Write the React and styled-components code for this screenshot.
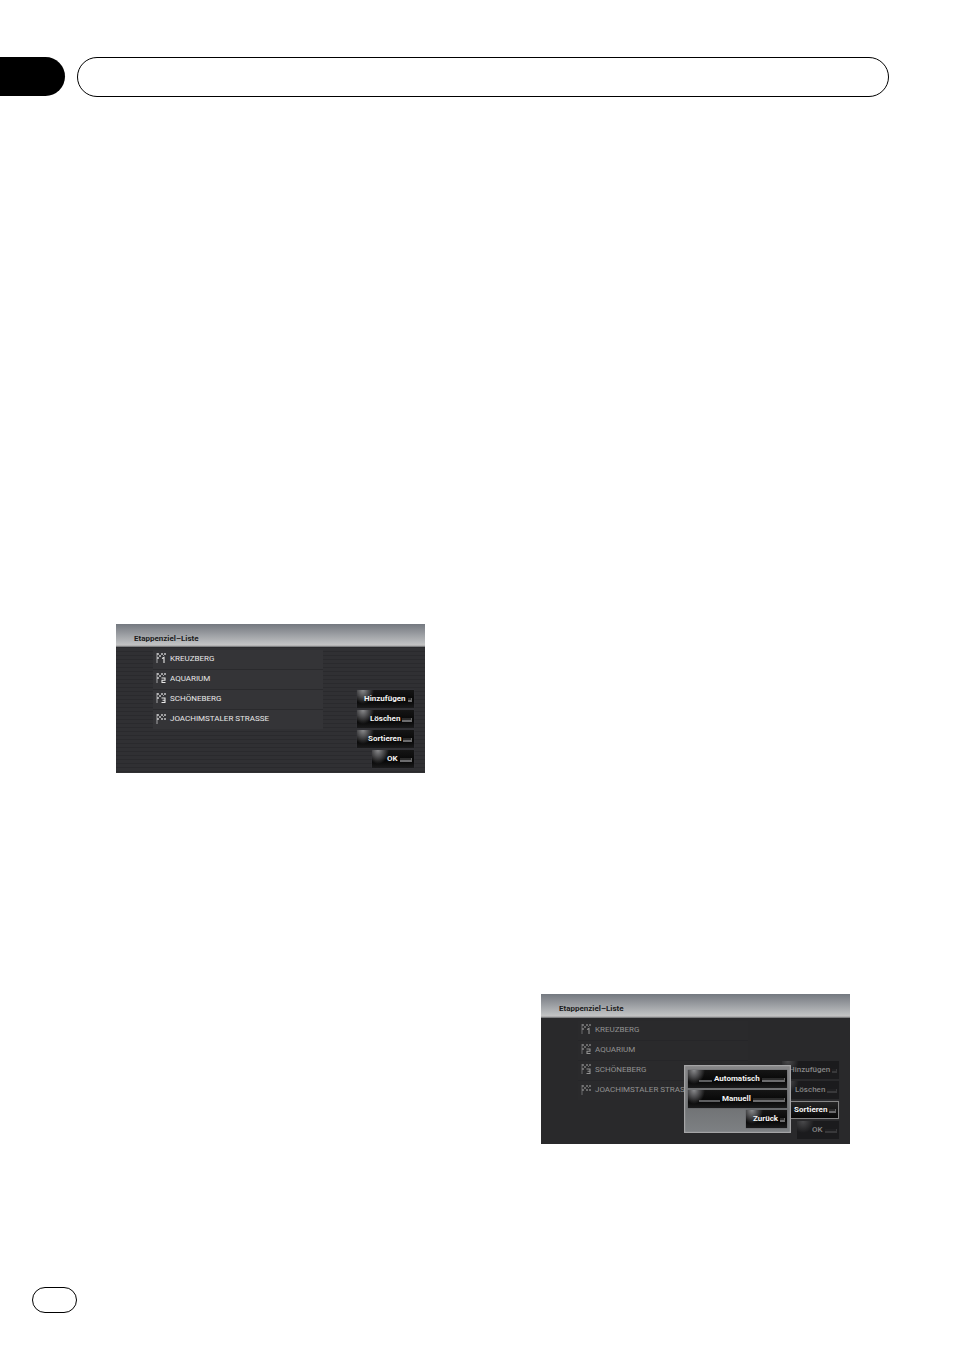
import React from "react";
import styled, { createGlobalStyle, css } from "styled-components";

const GlobalStyle = createGlobalStyle`
  *, *::before, *::after { box-sizing: border-box; }
  body { margin: 0; background: #fff; }
`;

const Page = styled.div`
  display: flex;
  flex-direction: column;
  min-height: 100vh;
  font-family: Roboto, "Liberation Sans", sans-serif;
`;

const Header = styled.header`
  display: flex;
  gap: 12px;
  padding: 57px 65px 0 0;
`;

const ChapterTab = styled.div`
  width: 65px;
  height: 39px;
  background: #000;
  border-radius: 0 20px 20px 0;
`;

const TitleFrame = styled.div`
  flex: 1;
  height: 40px;
  border: 1px solid #000;
  border-radius: 20px;
`;

const Columns = styled.main`
  flex: 1;
  display: grid;
  grid-template-columns: 1fr 1fr;
  gap: 116px;
  align-items: start;
  padding: 527px 104px 0 116px;
`;

const Column = styled.section`
  padding-top: ${(p) => (p.$lower ? "370px" : "0")};
`;

const Screen = styled.div`
  position: relative;
  display: flex;
  flex-direction: column;
  overflow: hidden;
  color: ${(p) => (p.$dimmed ? "#929292" : "#e8e8e8")};
  background: ${(p) =>
    p.$dimmed
      ? "#29292b"
      : "repeating-linear-gradient(#303033 0 3px, #2a2a2d 3px 4px)"};
`;

const ScreenTitle = styled.h2`
  margin: 0;
  height: ${(p) => (p.$dimmed ? "24px" : "23px")};
  padding: 6px 18px 0;
  font-size: 8px;
  line-height: 18px;
  font-weight: 700;
  color: #1c1c1c;
  background: linear-gradient(#747980, #92959a 35%, #b9bbbd 80%, #c4c4c4 92%, #66676a);
`;

const ScreenBody = styled.div`
  display: flex;
  justify-content: space-between;
  padding: 3px 11px 5px 37px;
`;

const StopList = styled.ol`
  list-style: none;
  margin: 0;
  padding: 0;
  width: 170px;
  height: 79px;
  background: ${(p) => (p.$dimmed ? "#2a2a2c" : "#343437")};
`;

const Stop = styled.li`
  display: flex;
  align-items: center;
  gap: 3px;
  height: 20px;
  padding: 0 0 2px 3px;
  font-size: 8px;
  line-height: 18px;
  white-space: nowrap;
  border-bottom: 1px solid ${(p) => (p.$dimmed ? "#262629" : "#2a2a2d")};
  &:last-child { border-bottom: 0; }
`;

const Actions = styled.div`
  display: flex;
  flex-direction: column;
  align-items: flex-end;
  gap: 2px;
  padding-top: 40px;
`;

const KeyButton = styled.button`
  display: flex;
  align-items: center;
  gap: 2px;
  width: ${(p) => p.$width || "57px"};
  height: 18px;
  padding: 0 2px 0 ${(p) => p.$indent || "7px"};
  border: 0;
  font-family: inherit;
  font-size: 8px;
  line-height: 18px;
  font-weight: 700;
  color: #f4f4f4;
  white-space: nowrap;
  background:
    radial-gradient(ellipse 11px 14px at 6px 0, #8a8b8d, #4c4c4e 50%, transparent),
    linear-gradient(#151515, #070707 60%, #1b1b1c);
  box-shadow: 0 0 1px #454547;

  &::after {
    content: "";
    flex: 1;
    height: 4px;
    margin-top: 1px;
    border-right: 1px solid #666;
    border-bottom: 2px solid #6c6c6e;
    background: #2b2b2b;
  }

  ${(p) => p.$lead && css`
    &::before {
      content: "";
      width: ${p.$lead};
      height: 2px;
      margin-top: 3px;
      background: #5d5e60;
    }
  `}

  ${(p) => p.$muted && css`
    color: #858585;
    font-weight: 500;
    background:
      radial-gradient(ellipse 11px 12px at 6px 0, #4b4b4d, transparent),
      #1b1b1d;
    box-shadow: none;
    &::after { border-color: #38383a; background: #202022; }
  `}

  ${(p) => p.$selected && css`
    border: 1px solid #858585;
    background: linear-gradient(#252525, #080808);
  `}
`;

const Popup = styled.div`
  position: absolute;
  right: 59px;
  bottom: 11px;
  display: flex;
  flex-direction: column;
  align-items: flex-end;
  gap: 2px;
  width: 107px;
  padding: 4px 3px;
  border: 1px solid #a4a4a6;
  background: linear-gradient(#858587, #727476 65%, #7d8083);
  box-shadow: inset 0 0 1px #ccc;
`;

const CHECKS = [[1, 0], [5, 0], [3, 2], [1, 4]];

const MARKS = {
  1: "M6 5.5 L8 4.5 V10",
  2: "M5.5 5 H9 V7.3 H6 V9.5 H9.5",
  3: "M5.5 5 H9 V9.5 H5.5 M6.5 7.3 H9",
};

function FlagIcon({ mark }) {
  return (
    <svg width="11" height="11" viewBox="0 0 11 11" aria-hidden="true">
      <path d="M1 0V10" stroke="currentColor" strokeWidth="0.8" opacity="0.8" />
      {CHECKS.map(([x, y]) => (
        <rect key={`${x}-${y}`} x={x} y={y} width="2" height="2" fill="currentColor" opacity="0.6" />
      ))}
      <path d="M7 2h1v1H7zM8 0h2v2H8z" fill="currentColor" opacity="0.6" />
      {mark ? (
        <path d={MARKS[mark]} fill="none" stroke="currentColor" strokeWidth="1.1" />
      ) : (
        <path d="M5 4h2v2H5zM8 4h2v2H8z" fill="currentColor" opacity="0.6" />
      )}
    </svg>
  );
}

const STOPS = [
  { name: "KREUZBERG", mark: 1 },
  { name: "AQUARIUM", mark: 2 },
  { name: "SCHÖNEBERG", mark: 3 },
  { name: "JOACHIMSTALER STRASSE" },
];

function StopsScreen({ sorting = false }) {
  return (
    <Screen $dimmed={sorting}>
      <ScreenTitle $dimmed={sorting}>Etappenziel–Liste</ScreenTitle>
      <ScreenBody>
        <StopList $dimmed={sorting}>
          {STOPS.map((stop) => (
            <Stop key={stop.name} $dimmed={sorting}>
              <FlagIcon mark={stop.mark} />
              {stop.name}
            </Stop>
          ))}
        </StopList>
        <Actions>
          <KeyButton type="button" $muted={sorting}>Hinzufügen</KeyButton>
          <KeyButton type="button" $muted={sorting} $indent="13px">Löschen</KeyButton>
          <KeyButton type="button" $selected={sorting} $indent="11px">Sortieren</KeyButton>
          <KeyButton type="button" $muted={sorting} $width="42px" $indent="15px">OK</KeyButton>
        </Actions>
      </ScreenBody>
      {sorting && (
        <Popup role="dialog" aria-label="Sortieren">
          <KeyButton type="button" $width="99px" $lead="13px" $indent="11px">Automatisch</KeyButton>
          <KeyButton type="button" $width="99px" $lead="21px" $indent="11px">Manuell</KeyButton>
          <KeyButton type="button" $width="41px">Zurück</KeyButton>
        </Popup>
      )}
    </Screen>
  );
}

const Footer = styled.footer`
  padding: 0 32px 38px;
`;

const PageNumberFrame = styled.div`
  width: 45px;
  height: 26px;
  border: 1px solid #000;
  border-radius: 13px;
`;

export default function App() {
  return (
    <Page>
      <GlobalStyle />
      <Header>
        <ChapterTab />
        <TitleFrame />
      </Header>
      <Columns>
        <Column>
          <StopsScreen />
        </Column>
        <Column $lower>
          <StopsScreen sorting />
        </Column>
      </Columns>
      <Footer>
        <PageNumberFrame />
      </Footer>
    </Page>
  );
}
